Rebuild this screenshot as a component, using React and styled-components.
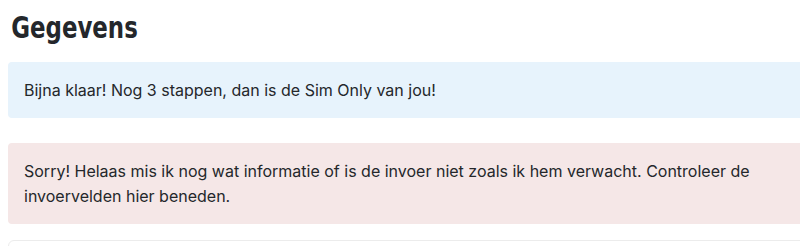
import React from "react";
import styled, { createGlobalStyle } from "styled-components";

const Global = createGlobalStyle`
  html, body { margin: 0; padding: 0; background: #ffffff; overflow: hidden; }
  body { font-family: Inter, "Noto Sans", sans-serif; color: #212529; }
`;

const Page = styled.div`
  display: flex;
  flex-direction: column;
  padding: 10px 0 0 8px;
  width: 840px;
`;

const Title = styled.h1`
  align-self: flex-start;
  margin: 0 0 18px 0;
  padding-left: 4px;
  font-family: "DejaVu Sans Condensed", "DejaVu Sans", sans-serif;
  font-stretch: condensed;
  font-weight: 700;
  font-size: 31px;
  line-height: 34px;
  color: #24272b;
  transform: scaleX(0.82);
  transform-origin: left center;
`;

const Alert = styled.div`
  box-sizing: border-box;
  border-radius: 4px;
  padding: 16px 16px 15px 16px;
  font-family: Inter, "Noto Sans", sans-serif;
  font-size: 16px;
  line-height: 25px;
  color: #24272b;
  background: ${(p) => (p.$tone === "error" ? "#f5e7e7" : "#e7f3fc")};
  margin-bottom: ${(p) => p.$gap}px;
`;

const Card = styled.div`
  box-sizing: border-box;
  border: 1px solid #ececec;
  border-radius: 6px;
  height: 60px;
`;

export default function App() {
  return (
    <>
      <Global />
      <Page>
        <Title>Gegevens</Title>
        <Alert $tone="info" $gap={25}>
          Bijna klaar! Nog 3 stappen, dan is de Sim Only van jou!
        </Alert>
        <Alert $tone="error" $gap={16}>
          Sorry! Helaas mis ik nog wat informatie of is de invoer niet zoals ik hem verwacht. Controleer de invoervelden hier beneden.
        </Alert>
        <Card />
      </Page>
    </>
  );
}
